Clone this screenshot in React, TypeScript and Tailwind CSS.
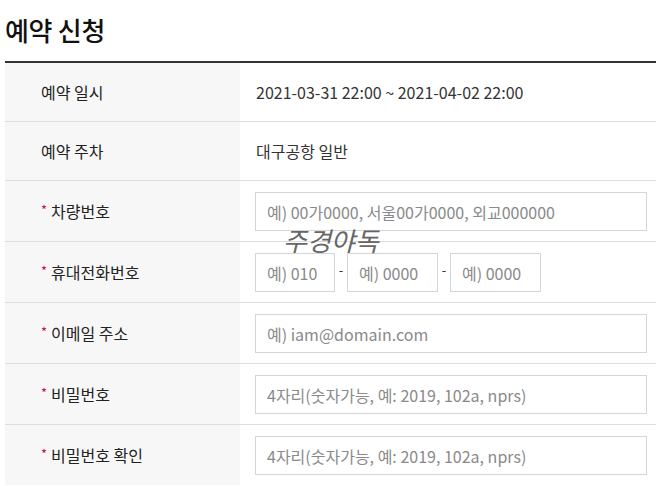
import React from "react"

const font = { fontFamily: '"Noto Sans CJK KR", "Noto Sans", sans-serif' }

function Label({ text, required }: { text: string; required?: boolean }) {
  return (
    <div className="bg-[#f7f7f7] pl-[36px] flex items-center text-[16px] text-[#222]">
      {required && <span className="text-[#c0143c] text-[13px] mr-[4px] -mt-[3px]">*</span>}
      {text}
    </div>
  )
}

function Field({ placeholder, className = "" }: { placeholder: string; className?: string }) {
  return (
    <input
      readOnly
      placeholder={placeholder}
      className={`h-[39px] border border-[#d5d5d5] bg-white px-[11px] text-[16px] placeholder:text-[#8a8a8a] outline-none ${className}`}
      style={font}
    />
  )
}

export default function App() {
  const pwHint = "4자리(숫자가능, 예: 2019, 102a, nprs)"
  return (
    <div className="bg-white w-[657px] h-[486px] overflow-hidden pl-[5px] pr-[1px]" style={font}>
      <h1 className="pt-[12px] pb-[13px] leading-[36px] text-[26px] font-medium text-[#111] tracking-[-0.3px]">
        예약 신청
      </h1>
      <div className="relative border-t-2 border-[#333] grid grid-cols-[235px_1fr]">
        <Label text="예약 일시" />
        <div className="h-[58px] flex items-center pl-[16px] text-[16px] text-[#333]">
          2021-03-31 22:00 ~ 2021-04-02 22:00
        </div>

        <div className="col-span-2 h-px bg-[#ddd]" />
        <Label text="예약 주차" />
        <div className="h-[58px] flex items-center pl-[16px] text-[16px] text-[#333]">
          대구공항 일반
        </div>

        <div className="col-span-2 h-px bg-[#ddd]" />
        <Label text="차량번호" required />
        <div className="pt-[11px] pb-[10px] pl-[15px] pr-[9px] flex">
          <Field placeholder="예) 00가0000, 서울00가0000, 외교000000" className="flex-1" />
        </div>

        <div className="col-span-2 h-px bg-[#ddd]" />
        <Label text="휴대전화번호" required />
        <div className="pt-[11px] pb-[10px] pl-[15px] pr-[9px] flex items-center">
          <Field placeholder="예) 010" className="w-[80px]" />
          <span className="w-[12px] text-center text-[13px] text-[#333] -mt-[6px]">-</span>
          <Field placeholder="예) 0000" className="w-[91px]" />
          <span className="w-[12px] text-center text-[13px] text-[#333] -mt-[6px]">-</span>
          <Field placeholder="예) 0000" className="w-[91px]" />
        </div>

        <div className="col-span-2 h-px bg-[#ddd]" />
        <Label text="이메일 주소" required />
        <div className="pt-[11px] pb-[10px] pl-[15px] pr-[9px] flex">
          <Field placeholder="예) iam@domain.com" className="flex-1" />
        </div>

        <div className="col-span-2 h-px bg-[#ddd]" />
        <Label text="비밀번호" required />
        <div className="pt-[11px] pb-[10px] pl-[15px] pr-[9px] flex">
          <Field placeholder={pwHint} className="flex-1" />
        </div>

        <div className="col-span-2 h-px bg-[#ddd]" />
        <Label text="비밀번호 확인" required />
        <div className="pt-[11px] pb-[10px] pl-[15px] pr-[9px] flex">
          <Field placeholder={pwHint} className="flex-1" />
        </div>

        <span className="absolute left-[278px] top-[164px] text-[26px] italic text-[#666] leading-none pointer-events-none">
          주경야독
        </span>
      </div>
    </div>
  )
}
